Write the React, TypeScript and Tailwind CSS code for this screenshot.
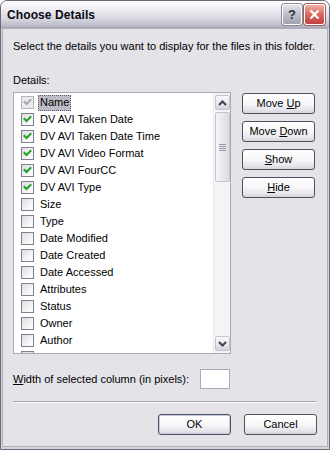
import React from "react";

const items: { label: string; checked: boolean; disabled?: boolean; selected?: boolean }[] = [
  { label: "Name", checked: true, disabled: true, selected: true },
  { label: "DV AVI Taken Date", checked: true },
  { label: "DV AVI Taken Date Time", checked: true },
  { label: "DV AVI Video Format", checked: true },
  { label: "DV AVI FourCC", checked: true },
  { label: "DV AVI Type", checked: true },
  { label: "Size", checked: false },
  { label: "Type", checked: false },
  { label: "Date Modified", checked: false },
  { label: "Date Created", checked: false },
  { label: "Date Accessed", checked: false },
  { label: "Attributes", checked: false },
  { label: "Status", checked: false },
  { label: "Owner", checked: false },
  { label: "Author", checked: false },
  { label: "", checked: false },
];

function CheckBox({ checked, disabled }: { checked: boolean; disabled?: boolean }) {
  return (
    <div
      className={
        "w-[13px] h-[13px] shrink-0 border flex items-center justify-center " +
        (disabled
          ? "border-[#b4b4bc] bg-[#ececf0]"
          : "border-[#80808e] bg-[linear-gradient(135deg,#dcdce2_0%,#f4f4f6_60%,#ffffff_100%)]")
      }
    >
      {checked && (
        <svg width="11" height="11" viewBox="0 0 11 11">
          <path
            d="M2.5 5 L4.5 7 L8.5 3"
            fill="none"
            stroke={disabled ? "#a8a8b0" : "#21a121"}
            strokeWidth="2"
            strokeLinecap="square"
          />
        </svg>
      )}
    </div>
  );
}

function XPButton({ children, def }: { children: React.ReactNode; def?: boolean }) {
  return (
    <div
      className={
        "w-[73px] h-[21px] rounded-[3px] border border-[#50505e] bg-[linear-gradient(to_bottom,#ffffff_0%,#f6f6f8_55%,#e4e4ea_85%,#d2d2da_100%)] text-[11px] text-black flex items-center justify-center leading-none " +
        (def ? "shadow-[inset_0_0_0_1px_#c4cce6]" : "")
      }
    >
      {children}
    </div>
  );
}

function ScrollBtn({ up }: { up?: boolean }) {
  return (
    <div className="w-[15px] h-[15px] mx-auto rounded-[2px] border border-[#c4c4cc] bg-[linear-gradient(to_bottom,#fafafc_0%,#e6e6ec_60%,#d4d4dc_100%)] flex items-center justify-center">
      <svg width="9" height="6" viewBox="0 0 9 6">
        <path
          d={up ? "M1 5 L4.5 1.5 L8 5" : "M1 1 L4.5 4.5 L8 1"}
          fill="none"
          stroke="#404050"
          strokeWidth="2"
        />
      </svg>
    </div>
  );
}

export default function App() {
  return (
    <div className="w-[330px] h-[450px] flex flex-col bg-[#d4d4dc] border border-[#6a6a78] rounded-t-[7px] overflow-hidden font-['Liberation_Sans',Arial,sans-serif] text-[11px] text-black">
      {/* Title bar */}
      <div className="h-[27px] shrink-0 flex items-center pl-[6px] pr-[4px] bg-[linear-gradient(to_bottom,#ffffff_0%,#eeeef3_30%,#d8d8e2_65%,#bebeca_90%,#a4a4b4_100%)]">
        <div className="font-bold text-[12px] text-[#0a0a14] flex-1 tracking-[0.1px]">Choose Details</div>
        <div className="flex gap-[2px]">
          <div className="w-[20px] h-[21px] rounded-[3px] border border-[#ffffff] shadow-[0_0_0_1px_#8a8a98] bg-[linear-gradient(to_bottom,#e4e4ec_0%,#c0c0cc_50%,#a0a0b0_100%)] flex items-center justify-center">
            <span className="font-bold text-[13px] text-[#303040] leading-none">?</span>
          </div>
          <div className="w-[21px] h-[21px] rounded-[3px] border border-[#ffffff] shadow-[0_0_0_1px_#a06060] bg-[linear-gradient(to_bottom,#f0b0a8_0%,#d86860_50%,#c04040_100%)] flex items-center justify-center">
            <svg width="11" height="11" viewBox="0 0 11 11">
              <path d="M1.5 1.5 L9.5 9.5 M9.5 1.5 L1.5 9.5" stroke="#ffffff" strokeWidth="2.2" />
            </svg>
          </div>
        </div>
      </div>

      {/* Client area */}
      <div className="flex-1 mx-[1px] mb-[2px] border border-[#b0b0bc] bg-[#e3e3e8] flex flex-col px-[10px] pt-[11px]">
        <div className="leading-[13px]">Select the details you want to display for the files in this folder.</div>
        <div className="leading-[13px] mt-[21px]">Details:</div>

        <div className="flex mt-[5px]">
          {/* Listbox */}
          <div className="w-[218px] h-[262px] border border-[#a5acb5] bg-white flex overflow-hidden">
            <div className="flex-1 flex flex-col pt-[1px] pl-[7px] overflow-hidden">
              {items.map((it, i) => (
                <div key={i} className="h-[17px] shrink-0 flex items-center">
                  <CheckBox checked={it.checked} disabled={it.disabled} />
                  {it.label && (
                    <span
                      className={
                        "ml-[4px] px-[2px] h-[16px] flex items-center leading-none " +
                        (it.selected ? "bg-[#bcbcc6] outline outline-1 outline-dotted outline-[#606070] -outline-offset-1" : "")
                      }
                    >
                      {it.label}
                    </span>
                  )}
                </div>
              ))}
            </div>
            {/* Scrollbar */}
            <div className="w-[17px] shrink-0 bg-[#f4f4f6] border-l border-[#ececf0] flex flex-col py-[2px]">
              <ScrollBtn up />
              <div className="mt-[2px] w-[15px] h-[70px] mx-auto rounded-[2px] border border-[#c4c4cc] bg-[linear-gradient(to_right,#f6f6f8_0%,#e8e8ee_50%,#dcdce2_100%)] flex flex-col items-center justify-center gap-[1px]">
                <div className="w-[7px] h-[1px] bg-[#9a9aa6]" />
                <div className="w-[7px] h-[1px] bg-[#9a9aa6]" />
                <div className="w-[7px] h-[1px] bg-[#9a9aa6]" />
                <div className="w-[7px] h-[1px] bg-[#9a9aa6]" />
              </div>
              <div className="flex-1" />
              <ScrollBtn />
            </div>
          </div>

          {/* Buttons */}
          <div className="ml-[11px] mt-[1px] flex flex-col gap-[7px]">
            <XPButton>
              Move&nbsp;<span className="underline">U</span>p
            </XPButton>
            <XPButton>
              Move&nbsp;<span className="underline">D</span>own
            </XPButton>
            <XPButton>
              <span className="underline">S</span>how
            </XPButton>
            <XPButton>
              <span className="underline">H</span>ide
            </XPButton>
          </div>
        </div>

        <div className="flex items-center mt-[15px]">
          <div className="w-[187px] leading-[13px]">
            <span className="underline">W</span>idth of selected column (in pixels):
          </div>
          <div className="w-[30px] h-[20px] border border-[#a5acb5] bg-white" />
        </div>

        <div className="mt-[12px] mr-[1px] h-[1px] bg-[#a2a2ac] border-b border-white box-content" />

        <div className="flex justify-end gap-[13px] mt-[11px]">
          <XPButton def>OK</XPButton>
          <XPButton>Cancel</XPButton>
        </div>
      </div>
    </div>
  );
}
